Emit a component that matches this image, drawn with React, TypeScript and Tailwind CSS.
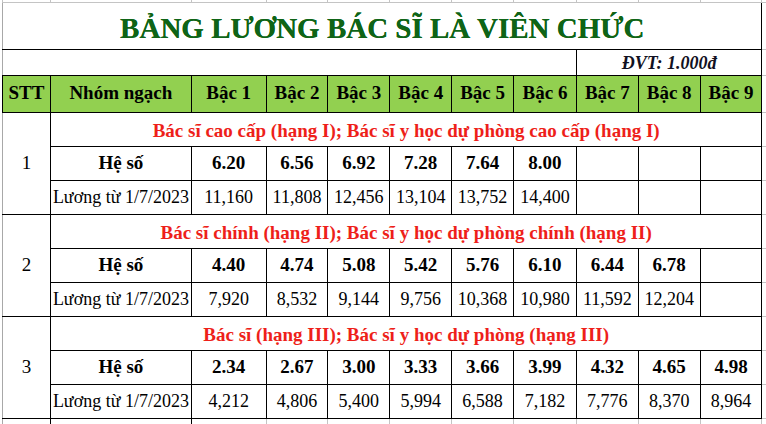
const groups = [
  {
    stt: "1",
    title: "Bác sĩ cao cấp (hạng I); Bác sĩ y học dự phòng cao cấp (hạng I)",
    heSo: ["6.20", "6.56", "6.92", "7.28", "7.64", "8.00", "", "", ""],
    luong: ["11,160", "11,808", "12,456", "13,104", "13,752", "14,400", "", "", ""],
  },
  {
    stt: "2",
    title: "Bác sĩ chính (hạng II); Bác sĩ y học dự phòng chính (hạng II)",
    heSo: ["4.40", "4.74", "5.08", "5.42", "5.76", "6.10", "6.44", "6.78", ""],
    luong: ["7,920", "8,532", "9,144", "9,756", "10,368", "10,980", "11,592", "12,204", ""],
  },
  {
    stt: "3",
    title: "Bác sĩ (hạng III); Bác sĩ y học dự phòng (hạng III)",
    heSo: ["2.34", "2.67", "3.00", "3.33", "3.66", "3.99", "4.32", "4.65", "4.98"],
    luong: ["4,212", "4,806", "5,400", "5,994", "6,588", "7,182", "7,776", "8,370", "8,964"],
  },
];

const bacs = ["Bậc 1", "Bậc 2", "Bậc 3", "Bậc 4", "Bậc 5", "Bậc 6", "Bậc 7", "Bậc 8", "Bậc 9"];

// Excel-style light grid line outside the table
const grid = "border-[#c4c4c4]";
const cell = "border border-black p-0 text-center";

export default function App() {
  return (
    <div
      className="w-[766px] h-[424px] overflow-hidden bg-white text-black"
      style={{ fontFamily: '"Liberation Serif", "Times New Roman", serif' }}
    >
      <table className="table-fixed border-collapse ml-[2px]">
        <colgroup>
          <col className="w-[48px]" />
          <col className="w-[141px]" />
          <col className="w-[75px]" />
          <col className="w-[62px]" />
          <col className="w-[62px]" />
          <col className="w-[62px]" />
          <col className="w-[62px]" />
          <col className="w-[63px]" />
          <col className="w-[62px]" />
          <col className="w-[62px]" />
          <col className="w-[62px]" />
          <col className="w-[4px]" />
        </colgroup>
        <tbody>
          {/* gridline strip above the title */}
          <tr className="h-[2px]">
            <td className={`p-0 border-l border-r ${grid}`} />
            <td className={`p-0 border-r ${grid}`} />
            <td className={`p-0 border-r ${grid}`} />
            <td className={`p-0 border-r ${grid}`} />
            <td className={`p-0 border-r ${grid}`} />
            <td className={`p-0 border-r ${grid}`} />
            <td className={`p-0 border-r ${grid}`} />
            <td className={`p-0 border-r ${grid}`} />
            <td className={`p-0 border-r ${grid}`} />
            <td className={`p-0 border-r ${grid}`} />
            <td className={`p-0 border-r ${grid}`} />
            <td className="p-0" />
          </tr>
          <tr className="h-[47px]">
            <td
              colSpan={11}
              className="p-0 align-bottom leading-[42px] text-center text-[29px] font-bold text-[#0f6417] border-t border-l border-t-[#c4c4c4] border-l-[#a8a8a8] border-b border-b-black border-r border-r-black [text-shadow:0_0_0.4px_#0f6417]"
            >
              BẢNG LƯƠNG BÁC SĨ LÀ VIÊN CHỨC
            </td>
            <td className={`p-0 border-t border-b ${grid}`} />
          </tr>
          <tr className="h-[26px]">
            <td colSpan={8} className="p-0 border border-black border-l-[#a8a8a8]" />
            <td colSpan={3} className="p-0 align-bottom leading-[24px] border border-black text-center text-[18px] font-bold italic text-[#111122]">
              ĐVT: 1.000đ
            </td>
            <td className={`p-0 border-b ${grid}`} />
          </tr>
          <tr className="h-[37px] bg-[#92d050] text-[19px] font-bold">
            <td className={cell}>STT</td>
            <td className={cell}>Nhóm ngạch</td>
            {bacs.map((b) => (
              <td key={b} className={`${cell} whitespace-nowrap`}>
                {b}
              </td>
            ))}
            <td className={`p-0 bg-white border-b ${grid}`} />
          </tr>
          {groups.map((g) => (
            <GroupRows key={g.stt} g={g} />
          ))}
          <tr className="h-[10px]">
            <td className="p-0 border-t border-t-black border-l border-l-[#a8a8a8] border-r border-r-black" />
            <td className="p-0 border-t border-t-black border-r border-r-black" />
            {bacs.map((b) => (
              <td key={b} className={`p-0 border-t border-t-black border-r ${grid}`} />
            ))}
            <td className="p-0" />
          </tr>
        </tbody>
      </table>
    </div>
  );
}

function GroupRows({ g }: { g: (typeof groups)[number] }) {
  return (
    <>
      <tr className="h-[34px]">
        <td rowSpan={3} className={`${cell} border-l-[#a8a8a8] text-[19px]`}>
          {g.stt}
        </td>
        <td colSpan={10} className={`${cell} align-bottom leading-[30px] text-[19px] font-bold text-[#ee1f1a] whitespace-nowrap`}>
          {g.title}
        </td>
        <td className={`p-0 border-b ${grid}`} />
      </tr>
      <tr className="h-[34px] text-[19px] font-bold">
        <td className={cell}>Hệ số</td>
        {g.heSo.map((v, i) => (
          <td key={i} className={cell}>
            {v}
          </td>
        ))}
        <td className={`p-0 border-b ${grid}`} />
      </tr>
      <tr className="h-[34px] text-[18px]">
        <td className={`${cell} text-left pl-[2px] whitespace-nowrap`}>Lương từ 1/7/2023</td>
        {g.luong.map((v, i) => (
          <td key={i} className={cell}>
            {v}
          </td>
        ))}
        <td className={`p-0 border-b ${grid}`} />
      </tr>
    </>
  );
}
